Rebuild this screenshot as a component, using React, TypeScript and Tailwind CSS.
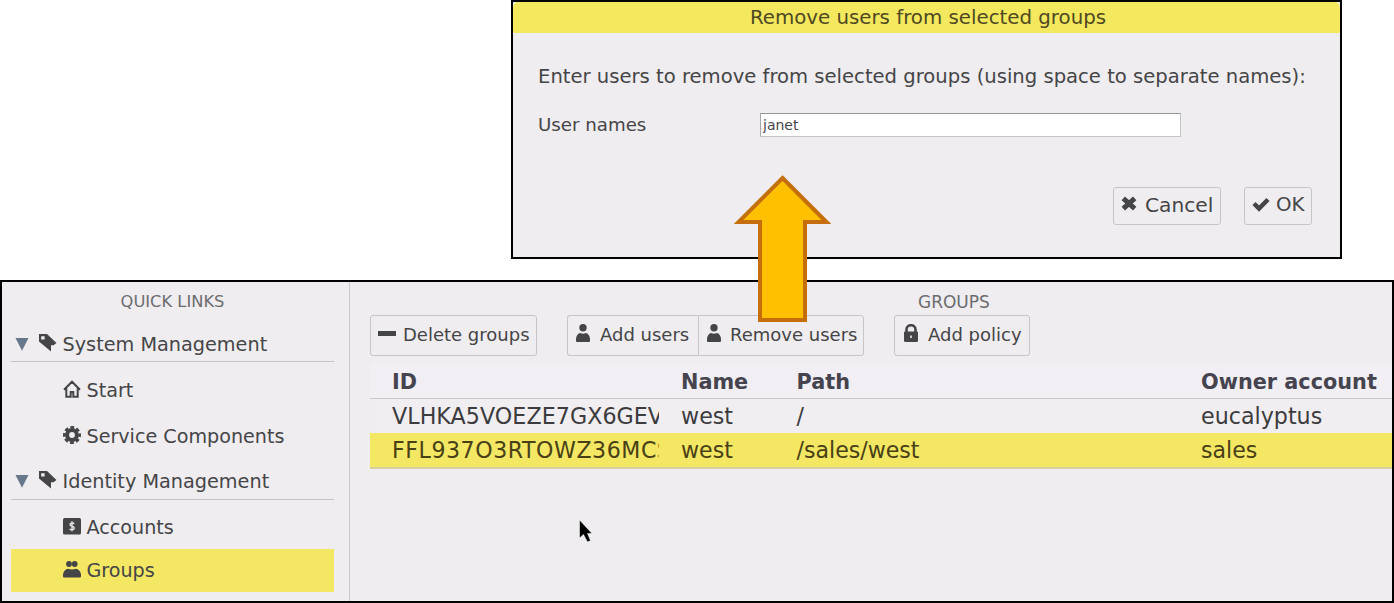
import React from "react";

const INK = "#454547";

function Tag() {
  return (
    <svg width="18" height="18" viewBox="0 0 18 18" className="shrink-0">
      <path fillRule="evenodd" fill={INK} d="M0 0H8L17.500 9L14.500 11.300H12V17.500L0 7.500ZM2.200 2.200V5.600H5.600V2.200Z" />
    </svg>
  );
}

function Home() {
  return (
    <svg width="18" height="18" viewBox="0 0 18 18" className="shrink-0">
      <path d="M1 9.700L9 1.700L17 9.700M3.300 8V16.700H7.700V12H10.300V16.700H14.700V8" fill="none" stroke={INK} strokeWidth="2" />
    </svg>
  );
}

function Gear() {
  return (
    <svg width="18" height="18" viewBox="0 0 18 18" className="shrink-0">
      <circle cx="9" cy="9" r="4.900" fill="none" stroke={INK} strokeWidth="4" />
      <circle cx="9" cy="9" r="7.600" fill="none" stroke={INK} strokeWidth="2.800" strokeDasharray="3.700 2.269" strokeDashoffset="1.850" />
    </svg>
  );
}

function Dollar() {
  return (
    <svg width="18" height="17" viewBox="0 0 18 17" className="shrink-0">
      <rect width="18" height="16.500" rx="1.500" fill={INK} />
      <path d="M11.300 5.700C10.500 4.700 7 4.600 7 6.500C7 8.700 11.300 7.800 11.300 10.100C11.300 12.200 7.500 12 6.700 10.800M9 3.300V13.300" fill="none" stroke="#e4e2e5" strokeWidth="1.400" />
    </svg>
  );
}

function People() {
  return (
    <svg width="18" height="17" viewBox="0 0 18 17" className="shrink-0">
      <circle cx="6" cy="3" r="2.900" fill={INK} />
      <circle cx="11.700" cy="3" r="2.900" fill={INK} />
      <path d="M0 15.500V13.500Q0.500 9 5 7.800Q9 9.300 13 7.800Q17.500 9 18 13.500V15.500Q18 16.500 17 16.500H1Q0 16.500 0 15.500Z" fill={INK} />
    </svg>
  );
}

function Person() {
  return (
    <svg width="14" height="18" viewBox="0 0 14 18" className="shrink-0">
      <circle cx="7" cy="3.700" r="3.700" fill={INK} />
      <path d="M0 17V15Q0.300 10.300 4 9Q7 10.500 10 9Q13.700 10.300 14 15V17Q14 18 13 18H1Q0 18 0 17Z" fill={INK} />
    </svg>
  );
}

function Lock() {
  return (
    <svg width="14" height="18" viewBox="0 0 14 18" className="shrink-0">
      <path d="M2.500 8.500V5.500A4.500 4.300 0 0 1 11.500 5.500V8.500" fill="none" stroke={INK} strokeWidth="2.600" />
      <path fillRule="evenodd" fill={INK} d="M0 8.500Q0 7.500 1 7.500H13Q14 7.500 14 8.500V16.500Q14 18 12.500 18H1.500Q0 18 0 16.500ZM6.200 11.500V14H7.800V11.500Z" />
    </svg>
  );
}

function Section({ label, className }: { label: string; className: string }) {
  return (
    <div className={`ml-[9px] flex w-[323px] border-b border-[#c3c3c5] pl-[4px] text-[19.25px] ${className}`}>
      <svg width="14" height="13" viewBox="0 0 14 13" className="mt-[5px] shrink-0">
        <path d="M0.500 0H13.500L7 12.700Z" fill="#68788c" />
      </svg>
      <span className="mt-[0.5px] ml-[9.500px] w-[24px]"><Tag /></span>
      <span className="leading-[24px]">{label}</span>
    </div>
  );
}

function Link({ label, icon, active }: { label: string; icon: React.ReactNode; active?: boolean }) {
  return (
    <div className={`ml-[9px] flex h-[43px] w-[323px] items-center pl-[52px] text-[19.15px] ${active ? "bg-[#f3e763]" : ""}`}>
      <span className="-mt-[3px] w-[23.500px]">{icon}</span>
      <span className="mt-[2.500px]">{label}</span>
    </div>
  );
}

export default function App() {
  return (
    <div className="relative flex h-[603px] w-[1394px] flex-col overflow-hidden bg-white font-['DejaVu_Sans',sans-serif] whitespace-nowrap text-[#454547]">
      <section className="ml-[511px] h-[259px] w-[831px] border-2 border-black bg-[#efedf0]">
        <h1 className="h-[31px] rounded-t-[5px] bg-[#f4e85f] pl-[3px] text-center text-[19.8px] leading-[31px] text-[#4f4922]">Remove users from selected groups</h1>
        <p className="mt-[32px] ml-[25px] text-[19.6px] leading-[24px]">Enter users to remove from selected groups (using space to separate names):</p>
        <div className="mt-[24px] ml-[25px] flex h-[24px] items-center">
          <label htmlFor="users" className="w-[222px] text-[18.2px]">User names</label>
          <input id="users" defaultValue="janet" className="h-[24px] w-[421px] border border-[#c4c4c6] border-t-[#969698] border-l-[#a8a8aa] bg-white pl-[2px] text-[14px] outline-none" />
        </div>
        <div className="mt-[50px] mr-[28px] flex justify-end gap-[23px]">
          <button className="flex h-[38px] w-[108px] items-center rounded-[3px] border-[1.5px] border-[#c6c5c8] pl-[7px] text-[20.2px]">
            <svg width="16" height="15" viewBox="0 0 16 15" className="-mt-[5px] mr-[8px]">
              <path d="M2.300 2.300L13.700 12.700M13.700 2.300L2.300 12.700" stroke={INK} strokeWidth="5" />
            </svg>
            <span className="-mt-[1px]">Cancel</span>
          </button>
          <button className="flex h-[38px] w-[68px] items-center rounded-[3px] border-[1.5px] border-[#c6c5c8] pl-[7px] text-[19.8px]">
            <svg width="18" height="15" viewBox="0 0 18 15" className="-mt-[4px] mr-[6px]">
              <path d="M2 6.500L7 11.500L16 2.500" fill="none" stroke={INK} strokeWidth="4.500" />
            </svg>
            <span className="-mt-[2px]">OK</span>
          </button>
        </div>
      </section>

      <section className="mt-[21px] flex h-[323px] w-[1394px] border-2 border-black bg-[#efedf0]">
        <aside className="w-[348px] shrink-0 border-r border-[#c9c9cb]">
          <h2 className="mt-[8px] pr-[6px] text-center text-[16.3px] leading-[24px] text-[#6c6c6e]">QUICK LINKS</h2>
          <Section label="System Management" className="mt-[19px] h-[29px]" />
          <div className="mt-[7px] flex flex-col gap-[3px]">
            <Link label="Start" icon={<Home />} />
            <Link label="Service Components" icon={<Gear />} />
          </div>
          <Section label="Identity Management" className="mt-[12px] h-[30px]" />
          <div className="mt-[6px]">
            <Link label="Accounts" icon={<Dollar />} />
            <Link label="Groups" icon={<People />} active />
          </div>
        </aside>
        <main className="min-w-0 flex-1 pl-[20px]">
          <h2 className="mt-[8px] pl-[548px] text-[17px] leading-[24px] text-[#6c6c6e]">GROUPS</h2>
          <div className="mt-px flex h-[41px] text-[18px]">
            <button className="flex w-[167px] items-center rounded-[3px] border-[1.5px] border-[#c6c5c8] pb-[2px] pl-[7px]">
              <span className="-mt-[3px] mr-[7px] h-[5px] w-[18px] bg-[#454547]" />Delete groups
            </button>
            <button className="ml-[30px] flex w-[131px] items-center rounded-l-[3px] border-[1.5px] border-r-0 border-[#c6c5c8] pb-[2px] pl-[8px]">
              <span className="-mt-[4px] mr-[10px]"><Person /></span>Add users
            </button>
            <button className="flex w-[166px] items-center rounded-r-[3px] border-[1.5px] border-[#c6c5c8] pb-[2px] pl-[8px]">
              <span className="-mt-[4px] mr-[9px]"><Person /></span>Remove users
            </button>
            <button className="ml-[30px] flex w-[136px] items-center rounded-[3px] border-[1.5px] border-[#c6c5c8] pb-[2px] pl-[9px]">
              <span className="-mt-[4px] mr-[10px]"><Lock /></span>Add policy
            </button>
          </div>
          <div className="mt-[6px] grid h-[37px] grid-cols-[289px_115.5px_404.5px_1fr] items-center border-b border-[#c6c6c8] bg-[#f1eef4] pt-[5px] pl-[22px] text-[20.8px] font-bold text-[#45444e]">
            <span>ID</span><span>Name</span><span>Path</span><span>Owner account</span>
          </div>
          <div className="grid h-[34px] grid-cols-[289px_115.5px_404.5px_1fr] items-center bg-[#f1eef2] pt-px pl-[22px] text-[22.2px] text-[#3c3b3e]">
            <span className="w-[267px] overflow-hidden tracking-[0.05px]">VLHKA5VOEZE7GX6GEV</span><span>west</span><span>/</span><span>eucalyptus</span>
          </div>
          <div className="grid h-[36px] grid-cols-[289px_115.5px_404.5px_1fr] items-center border-b-2 border-[#d6d0a0] bg-[#f3e763] pt-px pl-[22px] text-[22.1px] text-[#494016]">
            <span className="w-[267px] overflow-hidden tracking-[0.55px]">FFL937O3RTOWZ36MCS</span><span>west</span><span>/sales/west</span><span>sales</span>
          </div>
        </main>
      </section>

      <svg width="98" height="148" viewBox="0 0 98 148" className="absolute top-[175px] left-[734px]">
        <path d="M48.500 3L92.500 47H71V145H26V47H4.500Z" fill="#ffc000" stroke="#c56e0b" strokeWidth="4" />
      </svg>
      <svg width="14" height="23" viewBox="0 0 14 23" className="absolute top-[520px] left-[579px]">
        <path d="M0.500 0V18L4.500 14.500L8.500 22L11.500 20.500L8.500 13.500H13Z" fill="#000" stroke="#fff" strokeWidth="0.500" />
      </svg>
    </div>
  );
}
